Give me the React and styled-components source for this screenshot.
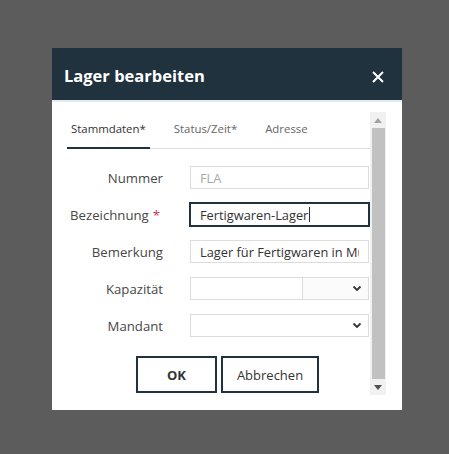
import React from 'react';
import styled, { createGlobalStyle } from 'styled-components';

const GlobalStyle = createGlobalStyle`
    html, body {
        margin: 0;
        padding: 0;
        height: 100%;
        background: #5c5c5c;
        font-family: "Open Sans", "Noto Sans", Arial, sans-serif;
    }
    #root {
        height: 100%;
    }
`;

const Backdrop = styled.div`
    width: 449px;
    height: 454px;
    padding: 48px 0 0 52px;
    box-sizing: border-box;
`;

const Dialog = styled.div`
    width: 350px;
    height: 362px;
    background: #ffffff;
    display: flex;
    flex-direction: column;
`;

const Header = styled.div`
    height: 50px;
    background: #1f323e;
    border-bottom: 2px solid #e6ebee;
    display: flex;
    align-items: center;
    justify-content: space-between;
    padding: 2px 18px 0 12px;
    box-sizing: content-box;
`;

const Title = styled.h1`
    margin: 0;
    font-size: 16.5px;
    font-weight: 700;
    color: #ffffff;
`;

const CloseButton = styled.button`
    border: 0;
    background: none;
    padding: 0;
    width: 12px;
    height: 12px;
    margin-top: 4px;
    display: flex;
    cursor: pointer;
`;

const Body = styled.div`
    flex: 1;
    display: flex;
    padding: 8px 16px 15px 15px;
    min-height: 0;
`;

const Content = styled.div`
    flex: 1;
    display: flex;
    flex-direction: column;
`;

const TabBar = styled.div`
    display: flex;
    gap: 20px;
    height: 38px;
    border-bottom: 1px solid #dedede;
`;

const Tab = styled.div`
    padding: 0 4px;
    display: flex;
    align-items: center;
    font-size: 11.4px;
    color: ${p => (p.$active ? '#333333' : '#666666')};
    border-bottom: 2px solid ${p => (p.$active ? '#1f323e' : 'transparent')};
    margin-bottom: -1px;
`;

const Form = styled.div`
    display: flex;
    flex-direction: column;
    gap: 14px;
    padding-top: 17px;
`;

const Row = styled.div`
    display: flex;
    align-items: center;
    gap: 27px;
    height: 23px;
`;

const Label = styled.label`
    width: 96px;
    text-align: right;
    font-size: 13.2px;
    color: #474747;
`;

const Required = styled.span`
    color: #d0334a;
    margin: 0 3px 0 4px;
`;

const Field = styled.div`
    width: 179px;
    height: 23px;
    display: flex;
`;

const TextBox = styled.div`
    flex: 1;
    min-width: 0;
    height: 23px;
    box-sizing: border-box;
    border: 1px solid ${p => (p.$focused ? '#1f323e' : '#dcdcdc')};
    box-shadow: ${p => (p.$focused ? '0 0 0 1px #1f323e' : 'none')};
    padding: 0 9px;
    font-size: 12.8px;
    color: ${p => (p.$muted ? '#a8a8a8' : '#333333')};
    display: flex;
    align-items: center;
    white-space: nowrap;
    overflow: hidden;
    position: relative;
    z-index: ${p => (p.$focused ? 1 : 0)};
`;

const Clip = styled.span`
    overflow: hidden;
    white-space: nowrap;
    flex: 1;
    min-width: 0;
`;

const Caret = styled.span`
    display: inline-block;
    width: 1px;
    height: 15px;
    background: #333;
    margin-left: 1px;
`;

const SelectBox = styled.div`
    width: ${p => p.$width || 'auto'};
    flex: ${p => (p.$width ? 'none' : 1)};
    height: 23px;
    box-sizing: border-box;
    border: 1px solid #dcdcdc;
    border-left-width: ${p => (p.$joined ? 0 : '1px')};
    background: ${p => (p.$joined ? '#fbfbfb' : '#ffffff')};
    display: flex;
    align-items: center;
    justify-content: flex-end;
    padding-right: 6px;
`;

const Buttons = styled.div`
    display: flex;
    justify-content: center;
    gap: 4px;
    padding-left: 18px;
    margin-top: 19px;
`;

const Button = styled.button`
    height: 37px;
    width: ${p => p.$width};
    box-sizing: border-box;
    background: #ffffff;
    border: 2px solid #1f323e;
    font-family: inherit;
    font-size: 13px;
    font-weight: ${p => (p.$primary ? 700 : 400)};
    color: #333333;
    cursor: pointer;
`;

const Scrollbar = styled.div`
    width: 16px;
    margin-top: 2px;
    background: #f1f1f1;
    display: flex;
    flex-direction: column;
    align-items: center;
`;

const ArrowCell = styled.div`
    height: 16px;
    width: 16px;
    display: flex;
    align-items: center;
    justify-content: center;
`;

const Thumb = styled.div`
    flex: 1;
    width: 13px;
    margin-left: 1px;
    background: #c1c1c1;
`;

const Chevron = () => (
    <svg width="10" height="7" viewBox="0 0 10 7">
        <path d="M1.5 1.5 L5 5 L8.5 1.5" stroke="#333" strokeWidth="1.8" fill="none" />
    </svg>
);

const Arrow = ({ up, color }) => (
    <svg width="8" height="5" viewBox="0 0 8 5">
        <path d={up ? 'M0 5 L4 0 L8 5 Z' : 'M0 0 L8 0 L4 5 Z'} fill={color} />
    </svg>
);

const App = () => (
    <>
        <GlobalStyle />
        <Backdrop>
            <Dialog>
                <Header>
                    <Title>Lager bearbeiten</Title>
                    <CloseButton aria-label="Schließen">
                        <svg width="12" height="12" viewBox="0 0 12 12">
                            <path d="M1 1 L11 11 M11 1 L1 11" stroke="#fff" strokeWidth="2" />
                        </svg>
                    </CloseButton>
                </Header>
                <Body>
                    <Content>
                        <TabBar>
                            <Tab $active>Stammdaten*</Tab>
                            <Tab>Status/Zeit*</Tab>
                            <Tab>Adresse</Tab>
                        </TabBar>
                        <Form>
                            <Row>
                                <Label>Nummer</Label>
                                <Field><TextBox $muted>FLA</TextBox></Field>
                            </Row>
                            <Row>
                                <Label>Bezeichnung<Required>*</Required></Label>
                                <Field><TextBox $focused>Fertigwaren-Lager<Caret /></TextBox></Field>
                            </Row>
                            <Row>
                                <Label>Bemerkung</Label>
                                <Field><TextBox><Clip>Lager für Fertigwaren in München</Clip></TextBox></Field>
                            </Row>
                            <Row>
                                <Label>Kapazität</Label>
                                <Field>
                                    <TextBox />
                                    <SelectBox $width="66px" $joined><Chevron /></SelectBox>
                                </Field>
                            </Row>
                            <Row>
                                <Label>Mandant</Label>
                                <Field><SelectBox><Chevron /></SelectBox></Field>
                            </Row>
                        </Form>
                        <Buttons>
                            <Button $primary $width="81px">OK</Button>
                            <Button $width="98px">Abbrechen</Button>
                        </Buttons>
                    </Content>
                    <Scrollbar>
                        <ArrowCell><Arrow up color="#a3a3a3" /></ArrowCell>
                        <Thumb />
                        <ArrowCell><Arrow color="#505050" /></ArrowCell>
                    </Scrollbar>
                </Body>
            </Dialog>
        </Backdrop>
    </>
);

export default App;
